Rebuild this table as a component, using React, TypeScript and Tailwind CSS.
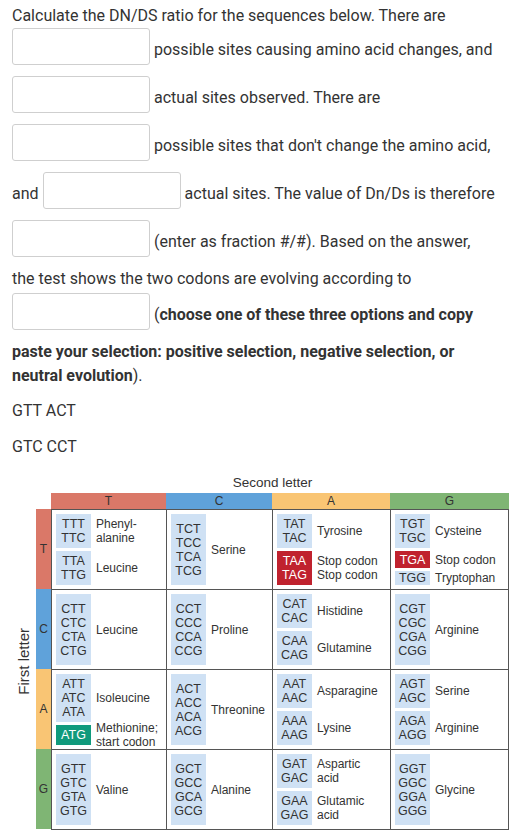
import React from "react";

type Group = {
  codons: string[];
  label: string[];
  h: number;
  tone?: "stop" | "start";
};

const BLUE_BOX = "bg-[#cfe1f4] text-[#333]";
const STOP_BOX = "bg-[#c0222e] text-white";
const START_BOX = "bg-[#109a7c] text-white";

const two = (codons: string[], label: string[], tone?: "stop" | "start"): Group => ({
  codons,
  label,
  h: 34,
  tone,
});
const four = (codons: string[], label: string[]): Group => ({ codons, label, h: 71 });

const rows: { letter: string; bar: string; cells: Group[][] }[] = [
  {
    letter: "T",
    bar: "bg-[#da7868]",
    cells: [
      [two(["TTT", "TTC"], ["Phenyl-", "alanine"]), two(["TTA", "TTG"], ["Leucine"])],
      [four(["TCT", "TCC", "TCA", "TCG"], ["Serine"])],
      [
        two(["TAT", "TAC"], ["Tyrosine"]),
        two(["TAA", "TAG"], ["Stop codon", "Stop codon"], "stop"),
      ],
      [
        two(["TGT", "TGC"], ["Cysteine"]),
        { codons: ["TGA"], label: ["Stop codon"], h: 17, tone: "stop" },
        { codons: ["TGG"], label: ["Tryptophan"], h: 14 },
      ],
    ],
  },
  {
    letter: "C",
    bar: "bg-[#5fa2da]",
    cells: [
      [four(["CTT", "CTC", "CTA", "CTG"], ["Leucine"])],
      [four(["CCT", "CCC", "CCA", "CCG"], ["Proline"])],
      [two(["CAT", "CAC"], ["Histidine"]), two(["CAA", "CAG"], ["Glutamine"])],
      [four(["CGT", "CGC", "CGA", "CGG"], ["Arginine"])],
    ],
  },
  {
    letter: "A",
    bar: "bg-[#f9c574]",
    cells: [
      [
        { codons: ["ATT", "ATC", "ATA"], label: ["Isoleucine"], h: 48 },
        { codons: ["ATG"], label: ["Methionine;", "start codon"], h: 20, tone: "start" },
      ],
      [four(["ACT", "ACC", "ACA", "ACG"], ["Threonine"])],
      [two(["AAT", "AAC"], ["Asparagine"]), two(["AAA", "AAG"], ["Lysine"])],
      [two(["AGT", "AGC"], ["Serine"]), two(["AGA", "AGG"], ["Arginine"])],
    ],
  },
  {
    letter: "G",
    bar: "bg-[#7fb574]",
    cells: [
      [four(["GTT", "GTC", "GTA", "GTG"], ["Valine"])],
      [four(["GCT", "GCC", "GCA", "GCG"], ["Alanine"])],
      [two(["GAT", "GAC"], ["Aspartic", "acid"]), two(["GAA", "GAG"], ["Glutamic", "acid"])],
      [four(["GGT", "GGC", "GGA", "GGG"], ["Glycine"])],
    ],
  },
];

const colWidths = ["w-[115px]", "w-[106px]", "w-[118px]", "w-[118px]"];

const headers = [
  { letter: "T", cls: "bg-[#da7868] w-[115px]" },
  { letter: "C", cls: "bg-[#5fa2da] w-[106px]" },
  { letter: "A", cls: "bg-[#f9c574] w-[118px]" },
  { letter: "G", cls: "bg-[#7fb574] w-[119px]" },
];

function CodonGroup({ group }: { group: Group }) {
  const box =
    group.tone === "stop" ? STOP_BOX : group.tone === "start" ? START_BOX : BLUE_BOX;
  return (
    <div className="flex items-center gap-[5px]" style={{ height: group.h }}>
      <div
        className={`flex h-full w-[35px] flex-col items-center justify-center text-[12.5px] leading-[14px] ${box}`}
      >
        {group.codons.map((c) => (
          <span key={c}>{c}</span>
        ))}
      </div>
      <div className="flex flex-col text-[12px] leading-[14px] text-[#333]">
        {group.label.map((l, i) => (
          <span key={i}>{l}</span>
        ))}
      </div>
    </div>
  );
}

function InputBox() {
  return (
    <input
      type="text"
      className="h-[37px] w-[138px] shrink-0 rounded-[3px] border border-[#cfcfcf] bg-white"
    />
  );
}

function Row({ children, className = "" }: { children: React.ReactNode; className?: string }) {
  return <div className={`flex items-center gap-[4px] ${className}`}>{children}</div>;
}

function CodonTable() {
  return (
    <div className="mt-[16px] flex font-['Liberation_Sans',Arial,sans-serif] text-[#333]">
      <div className="flex w-[24px] shrink-0 items-center justify-center pt-[17px]">
        <span className="rotate-180 text-[15px] leading-[16px] [writing-mode:vertical-rl]">
          First letter
        </span>
      </div>
      <div className="w-[473px] shrink-0">
        <div className="h-[16px] text-center text-[13.5px] leading-[16px]">Second letter</div>
        <div className="mt-[2px] flex pl-[15px]">
          {headers.map((h) => (
            <div key={h.letter} className={`h-[16px] text-center text-[12px] leading-[16px] ${h.cls}`}>
              {h.letter}
            </div>
          ))}
        </div>
        <div className="flex">
          <div className="flex w-[15px] shrink-0 flex-col">
            {rows.map((r) => (
              <div
                key={r.letter}
                className={`flex h-[80px] items-center justify-center text-[12px] ${r.bar}`}
              >
                {r.letter}
              </div>
            ))}
          </div>
          <div className="shrink-0 border-r border-b border-[#555]">
            {rows.map((r) => (
              <div key={r.letter} className="flex h-[80px] border-t border-[#555]">
                {r.cells.map((cell, ci) => (
                  <div
                    key={ci}
                    className={`flex shrink-0 flex-col justify-center gap-[3px] border-l border-[#555] pl-[4px] ${colWidths[ci]}`}
                  >
                    {cell.map((g, gi) => (
                      <CodonGroup key={gi} group={g} />
                    ))}
                  </div>
                ))}
              </div>
            ))}
          </div>
        </div>
      </div>
    </div>
  );
}

export default function App() {
  return (
    <div className="min-h-screen overflow-hidden bg-white px-[12px] pt-[4px] font-['Roboto',sans-serif] text-[16px] leading-[24px] text-[#333]">
      <p>Calculate the DN/DS ratio for the sequences below. There are</p>
      <Row>
        <InputBox />
        <span className="pt-[6px]">possible sites causing amino acid changes, and</span>
      </Row>
      <Row className="mt-[11px]">
        <InputBox />
        <span className="pt-[6px]">actual sites observed. There are</span>
      </Row>
      <Row className="mt-[11px]">
        <InputBox />
        <span className="pt-[6px]">possible sites that don't change the amino acid,</span>
      </Row>
      <Row className="mt-[11px]">
        <span className="pt-[6px]">and</span>
        <InputBox />
        <span className="pt-[6px]">actual sites. The value of Dn/Ds is therefore</span>
      </Row>
      <Row className="mt-[11px]">
        <InputBox />
        <span className="pt-[6px]">(enter as fraction #/#). Based on the answer,</span>
      </Row>
      <p className="mt-[10px]">the test shows the two codons are evolving according to</p>
      <Row className="mt-[2px]">
        <InputBox />
        <span className="pt-[6px]">
          (<strong className="font-bold">choose one of these three options and copy</strong>
        </span>
      </Row>
      <p className="mt-[10px]">
        <strong className="font-bold">
          paste your selection: positive selection, negative selection, or
          <br />
          neutral evolution
        </strong>
        ).
      </p>
      <p className="mt-[11px]">GTT ACT</p>
      <p className="mt-[12px]">GTC CCT</p>
      <CodonTable />
    </div>
  );
}
